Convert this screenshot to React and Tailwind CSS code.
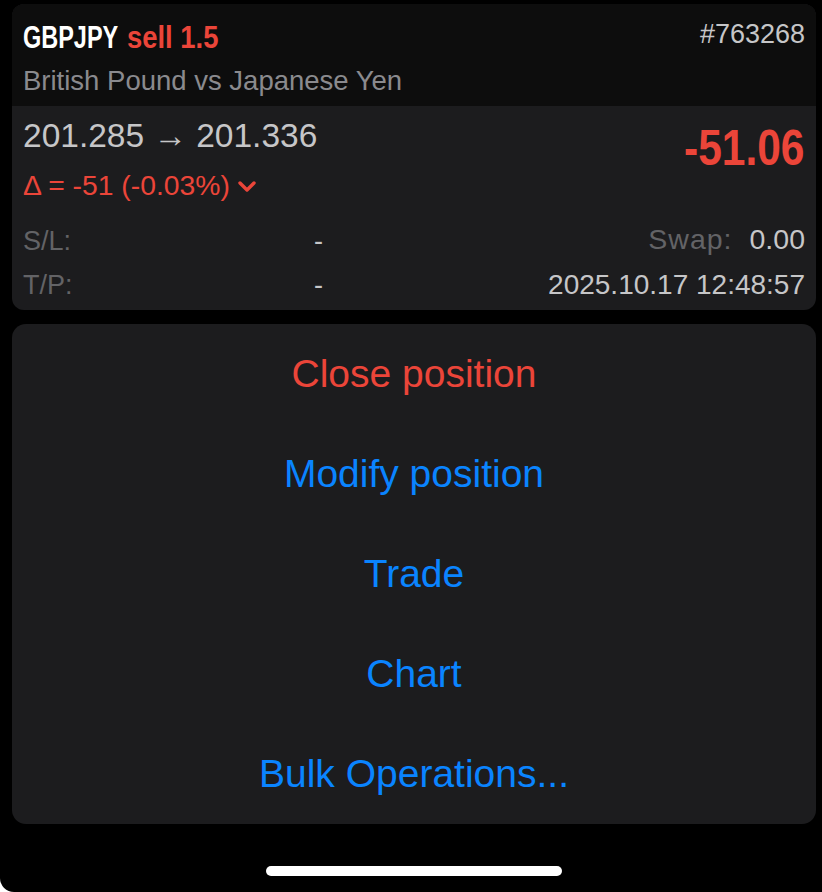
export default function App() {
  return (
    <div className="min-h-[892px] bg-white font-['Liberation_Sans',Arial,sans-serif]">
      <div className="min-h-[892px] bg-black rounded-bl-[14px] pt-[4px] pl-[12px] pr-[6px] flex flex-col">
        {/* Position card */}
        <div className="rounded-[12px] overflow-hidden bg-[#1c1c1e]">
          <div className="h-[102px] bg-[#0d0d0d] px-[11px] pt-[13px]">
            <div className="flex justify-between items-start">
              <div className="h-[40px] leading-[40px] text-[31.5px] font-bold whitespace-nowrap flex">
                <span className="inline-block w-[95px] origin-left scale-x-[0.745] text-white">GBPJPY</span>
                <span className="inline-block w-[9px]"></span>
                <span className="inline-block w-[91px] origin-left scale-x-[0.87] text-[#eb4539]">sell 1.5</span>
              </div>
              <div className="h-[36px] leading-[36px] -mt-[1px] text-[27px] text-[#c6c6c8]">#763268</div>
            </div>
            <div className="mt-[6px] h-[36px] leading-[36px] text-[27.5px] text-[#8a8a8e] whitespace-nowrap">
              British Pound vs Japanese Yen
            </div>
          </div>
          <div className="px-[11px] pb-[7px]">
            <div className="flex justify-between items-start">
              <div>
                <div className="mt-[10px] h-[40px] leading-[40px] text-[33.5px] text-[#c6c6c8] whitespace-nowrap">
                  201.285 → 201.336
                </div>
                <div className="mt-[11px] h-[36px] leading-[36px] text-[28.3px] text-[#eb4539] whitespace-nowrap flex items-center">
                  <span>Δ = -51 (-0.03%)</span>
                  <svg width="20" height="14" viewBox="0 0 20 14" className="ml-[7px] mt-[3px]">
                    <polyline points="3,3 10,10 17,3" fill="none" stroke="#eb4539" strokeWidth="3.4" strokeLinecap="round" strokeLinejoin="round" />
                  </svg>
                </div>
              </div>
              <div className="mt-[14px] h-[56px] leading-[56px] text-[50px] font-bold text-[#eb4539] whitespace-nowrap">
                <span className="inline-block w-[121px] origin-left scale-x-[0.85]">-51.06</span>
              </div>
            </div>
            <div className="mt-[20px] h-[36px] flex items-center text-[27px] whitespace-nowrap">
              <div className="w-[300px] flex justify-between items-center">
                <span className="text-[#636366]">S/L:</span>
                <span className="text-[#c6c6c8]">-</span>
              </div>
              <div className="flex-1 flex justify-end items-center -mt-[4px]">
                <span className="text-[#636366] text-[28.5px] tracking-[1px]">Swap:</span>
                <span className="ml-[17px] text-[#c6c6c8] text-[28.5px]">0.00</span>
              </div>
            </div>
            <div className="mt-[8px] h-[36px] flex items-center text-[27px] whitespace-nowrap">
              <div className="w-[300px] flex justify-between items-center">
                <span className="text-[#636366]">T/P:</span>
                <span className="text-[#c6c6c8]">-</span>
              </div>
              <div className="flex-1 flex justify-end items-center">
                <span className="text-[#c6c6c8] text-[28px]">2025.10.17 12:48:57</span>
              </div>
            </div>
          </div>
        </div>

        {/* Actions card */}
        <div className="mt-[14px] rounded-[14px] bg-[#1c1c1e] flex flex-col text-[39px]">
          <div className="h-[100px] flex items-center justify-center text-[#eb4539]">Close position</div>
          <div className="h-[100px] flex items-center justify-center text-[#0a84ff]">Modify position</div>
          <div className="h-[100px] flex items-center justify-center text-[#0a84ff]">Trade</div>
          <div className="h-[100px] flex items-center justify-center text-[#0a84ff]">Chart</div>
          <div className="h-[100px] flex items-center justify-center text-[#0a84ff]">Bulk Operations...</div>
        </div>

        {/* Home indicator */}
        <div className="mt-[42px] flex justify-center">
          <div className="w-[296px] h-[10px] rounded-full bg-white"></div>
        </div>
      </div>
    </div>
  );
}
